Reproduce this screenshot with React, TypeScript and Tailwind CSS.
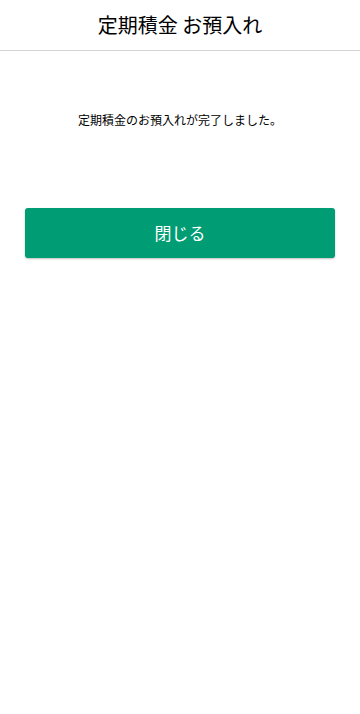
export default function App() {
  return (
    <div
      className="min-h-screen bg-white text-black"
      style={{ fontFamily: '"Noto Sans CJK JP", "Noto Sans", sans-serif' }}
    >
      <header className="flex h-[51px] items-center justify-center border-b border-[#d4d4d4]">
        <h1 className="text-[20px] leading-none">定期積金 お預入れ</h1>
      </header>
      <main className="px-[25px]">
        <p className="mt-[61px] text-center text-[12px] leading-[16px]">
          定期積金のお預入れが完了しました。
        </p>
        <button
          type="button"
          className="mt-[80px] flex h-[50px] w-full items-center justify-center rounded-[3px] bg-[#009c73] text-[17px] text-white shadow-[0_1px_2px_rgba(0,0,0,0.25)]"
        >
          閉じる
        </button>
      </main>
    </div>
  );
}
